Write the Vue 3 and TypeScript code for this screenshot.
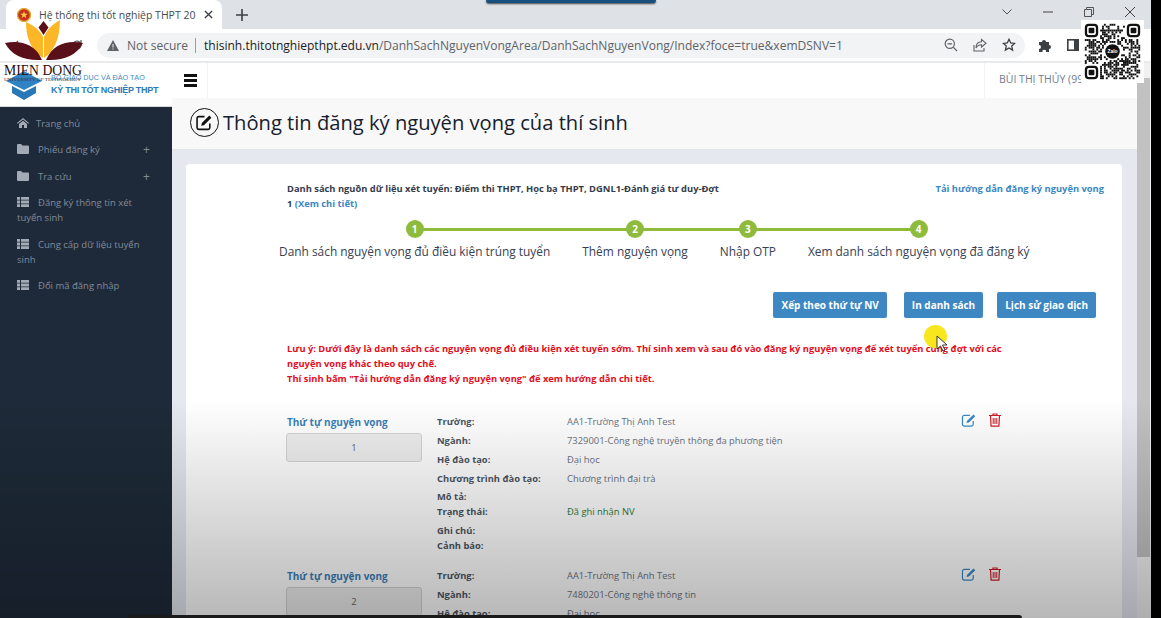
<script setup lang="ts">
import { computed } from 'vue'

interface MenuItem {
  label: string
  icon: 'home' | 'folder' | 'list'
  expandable?: boolean
}

interface Field {
  label: string
  value?: string
  status?: boolean
  rowClass?: 'tight' | 'short'
}

const menu: MenuItem[] = [
  { label: 'Trang chủ', icon: 'home' },
  { label: 'Phiếu đăng ký', icon: 'folder', expandable: true },
  { label: 'Tra cứu', icon: 'folder', expandable: true },
  { label: 'Đăng ký thông tin xét tuyển sinh', icon: 'list' },
  { label: 'Cung cấp dữ liệu tuyển sinh', icon: 'list' },
  { label: 'Đổi mã đăng nhập', icon: 'list' }
]

const steps = [
  'Danh sách nguyện vọng đủ điều kiện trúng tuyển',
  'Thêm nguyện vọng',
  'Nhập OTP',
  'Xem danh sách nguyện vọng đã đăng ký'
]

const wishes: { order: number; fields: Field[] }[] = [
  {
    order: 1,
    fields: [
      { label: 'Trường:', value: 'AA1-Trường Thị Anh Test' },
      { label: 'Ngành:', value: '7329001-Công nghệ truyền thông đa phương tiện' },
      { label: 'Hệ đào tạo:', value: 'Đại học' },
      { label: 'Chương trình đào tạo:', value: 'Chương trình đại trà', rowClass: 'short' },
      { label: 'Mô tả:', rowClass: 'tight' },
      { label: 'Trạng thái:', value: 'Đã ghi nhận NV', status: true },
      { label: 'Ghi chú:', rowClass: 'tight' },
      { label: 'Cảnh báo:' }
    ]
  },
  {
    order: 2,
    fields: [
      { label: 'Trường:', value: 'AA1-Trường Thị Anh Test' },
      { label: 'Ngành:', value: '7480201-Công nghệ thông tin' },
      { label: 'Hệ đào tạo:', value: 'Đại học' }
    ]
  }
]

// không cần giải mã được, chỉ cần trông giống mã QR
const qrCells = computed(() => {
  const size = 29
  const cells: { x: number; y: number }[] = []
  let seed = 73
  for (let y = 0; y < size; y++) {
    for (let x = 0; x < size; x++) {
      seed = (seed * 1103515245 + 12345) & 0x7fffffff
      const inFinder = (x < 8 && y < 8) || (x > 20 && y < 8) || (x < 8 && y > 20)
      const inLogo = Math.hypot(x - 14, y - 14) < 5
      if (!inFinder && !inLogo && (seed >> 12) % 100 < 52) cells.push({ x, y })
    }
  }
  return cells
})

const qrFinders = [
  { x: 0, y: 0 },
  { x: 22, y: 0 },
  { x: 0, y: 22 }
]
</script>

<template>
  <div class="window">
    <div class="browser">
      <div class="tabbar">
        <div class="tab">
          <svg class="favicon" viewBox="0 0 14 14" width="14" height="14">
            <circle cx="7" cy="7" r="6.5" fill="#c8301f" />
            <circle cx="7" cy="7" r="6.5" fill="none" stroke="#e2a92e" stroke-width="1.4" />
            <path d="M7 3.2l1 2.6h2.7L8.5 7.4l.8 2.6L7 8.5 4.700 10l.8-2.600-2.200-1.600H6z" fill="#f4cf3e" />
          </svg>
          <span class="tab-title">Hệ thống thi tốt nghiệp THPT 20</span>
          <svg class="tab-close" viewBox="0 0 10 10" width="9" height="9">
            <path d="M1 1l8 8M9 1l-8 8" stroke="#3c4043" stroke-width="1.5" />
          </svg>
        </div>
        <svg class="new-tab" viewBox="0 0 12 12" width="12" height="12">
          <path d="M6 0v12M0 6h12" stroke="#3c4043" stroke-width="1.6" />
        </svg>
        <div class="window-controls">
          <svg viewBox="0 0 10 6" width="10" height="6">
            <path d="M.5.5L5 5 9.500.5" fill="none" stroke="#555" />
          </svg>
          <svg viewBox="0 0 10 2" width="10" height="2">
            <path d="M0 1h10" stroke="#444" />
          </svg>
          <svg viewBox="0 0 10 10" width="10" height="10">
            <path d="M.5 2.500h7v7h-7zM2.500 2.500v-2h7v7h-2" fill="none" stroke="#555" />
          </svg>
          <svg viewBox="0 0 10 10" width="10" height="10">
            <path d="M0 0l10 10M10 0L0 10" stroke="#444" />
          </svg>
        </div>
      </div>

      <div class="toolbar">
        <div class="nav-icons">
          <svg viewBox="0 0 12 12" width="12" height="12">
            <path d="M11 6H2M6 2L2 6l4 4" fill="none" stroke="#5f6368" stroke-width="1.4" />
          </svg>
          <svg viewBox="0 0 12 12" width="12" height="12">
            <path d="M10 6a4 4 0 1 1-1.200-2.800M10 1v3H7" fill="none" stroke="#5f6368" stroke-width="1.3" />
          </svg>
        </div>
        <div class="omnibox">
          <svg viewBox="0 0 12 11" width="12" height="11">
            <path d="M6 0l6 11H0z" fill="#5f6368" />
            <path d="M6 4v3.500M6 8.500v1" stroke="#f1f3f4" />
          </svg>
          <span class="not-secure">Not secure</span>
          <span class="omni-sep"></span>
          <span class="url"><b>thisinh.thitotnghiepthpt.edu.vn</b>/DanhSachNguyenVongArea/DanhSachNguyenVong/Index?foce=true&amp;xemDSNV=1</span>
          <span class="omni-actions">
            <svg viewBox="0 0 14 14" width="14" height="14">
              <circle cx="5.800" cy="5.800" r="4.600" fill="none" stroke="#5f6368" stroke-width="1.200" />
              <path d="M9.200 9.200L13 13M3.500 5.800h4.600" stroke="#5f6368" stroke-width="1.200" />
            </svg>
            <svg viewBox="0 0 14 14" width="14" height="14">
              <path d="M1 7v6h10v-3M8.500 1.500L13 5.200 8.500 9V6.800C5.500 6.800 4 8 3 10c0-3.500 2-6 5.500-6.200z" fill="none" stroke="#5f6368" stroke-width="1.100" />
            </svg>
            <svg viewBox="0 0 14 14" width="14" height="14">
              <path d="M7 1.300l1.700 3.700 4 .4-3 2.700.9 4L7 10l-3.600 2.100.9-4-3-2.700 4-.4z" fill="none" stroke="#3c4043" stroke-width="1.300" />
            </svg>
          </span>
        </div>
        <svg class="puzzle" viewBox="0 0 14 14" width="14" height="14">
          <path d="M1 4h3a2 2 0 1 1 4 0h3v3a2 2 0 1 1 0 4v3H8a1.800 1.800 0 1 0-3.500 0H1v-3a2 2 0 1 0 0-4z" fill="#3c4043" />
        </svg>
        <svg class="side-panel" viewBox="0 0 12 12" width="12" height="12">
          <rect x=".8" y=".8" width="10.400" height="10.400" fill="none" stroke="#3c4043" stroke-width="1.600" />
          <rect x="7" y="1" width="4" height="10" fill="#3c4043" />
        </svg>
      </div>

      <div class="site">
        <aside class="sidebar">
          <div class="brand">
            <svg class="brand-cap" viewBox="0 0 36 30" width="36" height="30">
              <path d="M0 11L18 1l18 10-18 9z" fill="#2f83c3" />
              <path d="M6 16l12 6 12-6v7l-12 7-12-7z" fill="#2878b8" />
            </svg>
            <div class="brand-text">
              <span class="brand-top">BỘ GIÁO DỤC VÀ ĐÀO TẠO</span>
              <span class="brand-name">KỲ THI TỐT NGHIỆP THPT</span>
            </div>
          </div>
          <ul class="menu">
            <li v-for="item in menu" :key="item.label" class="menu-item" :class="{ home: item.icon === 'home' }">
              <svg v-if="item.icon === 'home'" class="menu-icon" viewBox="0 0 12 10" width="12" height="10">
                <path d="M6 0l6 5-.7.8L6 1.500.7 5.800 0 5zM2 6l4-3.200L10 6v4H7V7H5v3H2z" fill="#a2aab5" />
              </svg>
              <svg v-else-if="item.icon === 'folder'" class="menu-icon" viewBox="0 0 12 10" width="12" height="10">
                <path d="M0 1a1 1 0 0 1 1-1h3l1.500 1.500H11a1 1 0 0 1 1 1V9a1 1 0 0 1-1 1H1a1 1 0 0 1-1-1z" fill="#a2aab5" />
              </svg>
              <svg v-else class="menu-icon" viewBox="0 0 12 10" width="12" height="10">
                <path d="M0 0h3v2.800H0zM4 0h8v2.800H4zM0 3.600h3v2.800H0zM4 3.600h8v2.800H4zM0 7.200h3V10H0zM4 7.200h8V10H4z" fill="#a2aab5" />
              </svg>
              <span>{{ item.label }}</span>
              <span v-if="item.expandable" class="menu-plus">+</span>
            </li>
          </ul>
        </aside>

        <main class="main">
          <div class="topbar">
            <div class="burger">
              <span></span><span></span><span></span>
            </div>
            <div class="user">BÙI THỊ THỦY (99</div>
          </div>
          <div class="title-band">
            <span class="title-icon">
              <svg viewBox="0 0 16 16" width="17" height="17">
                <path d="M13 9v4a1.500 1.500 0 0 1-1.500 1.500h-9A1.500 1.500 0 0 1 1 13V4a1.500 1.500 0 0 1 1.500-1.500H8" fill="none" stroke="#111" stroke-width="1.500" />
                <path d="M5.500 8.500L12.500 1.500l2 2-7 7-2.600.6z" fill="#111" />
              </svg>
            </span>
            <h1>Thông tin đăng ký nguyện vọng của thí sinh</h1>
          </div>

          <div class="content">
            <section class="card">
              <div class="source-row">
                <p class="source">
                  Danh sách nguồn dữ liệu xét tuyển: Điểm thi THPT, Học bạ THPT, DGNL1-Đánh giá tư duy-Đợt 1
                  <a>(Xem chi tiết)</a>
                </p>
                <a class="guide">Tải hướng dẫn đăng ký nguyện vọng</a>
              </div>

              <div class="stepper">
                <span class="step-line"></span>
                <div v-for="(step, i) in steps" :key="step" class="step">
                  <span class="step-dot">{{ i + 1 }}</span>
                  <span class="step-label">{{ step }}</span>
                </div>
              </div>

              <div class="actions">
                <button class="btn">Xếp theo thứ tự NV</button>
                <button class="btn btn-print">In danh sách</button>
                <button class="btn">Lịch sử giao dịch</button>
              </div>

              <p class="notice">
                Lưu ý: Dưới đây là danh sách các nguyện vọng đủ điều kiện xét tuyển sớm. Thí sinh xem và sau đó vào đăng ký nguyện vọng để xét tuyển cùng đợt với các nguyện vọng khác theo quy chế.<br />
                Thí sinh bấm "Tải hướng dẫn đăng ký nguyện vọng" để xem hướng dẫn chi tiết.
              </p>

              <div v-for="wish in wishes" :key="wish.order" class="wish">
                <div class="wish-order">
                  <label>Thứ tự nguyện vọng</label>
                  <div class="order-input">{{ wish.order }}</div>
                </div>
                <dl class="wish-fields">
                  <div v-for="f in wish.fields" :key="f.label" class="field" :class="f.rowClass">
                    <dt>{{ f.label }}</dt>
                    <dd :class="{ status: f.status }">{{ f.value }}</dd>
                  </div>
                </dl>
                <div class="wish-actions">
                  <svg viewBox="0 0 16 15" width="16" height="14">
                    <path d="M12.500 8.500V12a2 2 0 0 1-2 2H3a2 2 0 0 1-2-2V4.500a2 2 0 0 1 2-2h6" fill="none" stroke="#3a87c5" stroke-width="1.300" />
                    <path d="M6 8.300L12.800 1.500l1.900 1.900L7.900 10.200l-2.500.6z" fill="#3a87c5" />
                  </svg>
                  <svg viewBox="0 0 12 14" width="12" height="14">
                    <path d="M0 2.500h12M4 2.500V1h4v1.500M1.500 2.500l.6 10.700h7.800l.6-10.700" fill="none" stroke="#cf1a26" stroke-width="1.200" />
                    <path d="M4.200 5v6M6 5v6M7.800 5v6" stroke="#cf1a26" />
                  </svg>
                </div>
              </div>
            </section>
          </div>
        </main>

        <div class="scrollbar">
          <span class="scroll-thumb"></span>
        </div>
      </div>
    </div>
    <div class="black-edge"></div>

    <!-- lớp phủ của video nằm trên trang -->
    <div class="video-shade"></div>
    <div class="video-top"></div>
    <div class="video-bottom"></div>

    <svg class="school-logo" viewBox="0 0 90 90" width="90" height="90">
      <path d="M26 22c7 3 14 8 17 15v21C34 52 26 42 26 22z" fill="#fbb726" />
      <path d="M60 20c-7 4-13 9-16 17v21c9-6 16-18 16-38z" fill="#fbb726" />
      <path d="M43.500 21l5 6.500-5 7.500-5-7.500z" fill="#5a1018" />
      <path d="M5 43c14-3 30 0 37 17-17 1-30-4-37-17z" fill="#5a1018" />
      <path d="M83 43c-14-3-30 0-37 17 17 1 30-4 37-17z" fill="#5a1018" />
      <text x="4" y="75" class="logo-name" textLength="78" lengthAdjust="spacingAndGlyphs">MIEN DONG</text>
      <text x="4" y="81" class="logo-sub" textLength="77" lengthAdjust="spacingAndGlyphs">UNIVERSITY OF TECHNOLOGY</text>
    </svg>

    <svg class="qr" viewBox="-2 -2 33 33" width="63" height="63">
      <rect x="-2" y="-2" width="33" height="33" fill="#fff" />
      <rect v-for="c in qrCells" :key="c.x + '-' + c.y" :x="c.x" :y="c.y" width="1" height="1" fill="#111" />
      <g v-for="f in qrFinders" :key="f.x + '-' + f.y">
        <rect :x="f.x + 0.6" :y="f.y + 0.6" width="5.800" height="5.800" rx="1.500" fill="none" stroke="#111" stroke-width="1.200" />
        <rect :x="f.x + 2" :y="f.y + 2" width="3" height="3" rx=".6" fill="#111" />
      </g>
      <circle cx="14.500" cy="14.500" r="3.800" fill="#111" />
      <text x="14.500" y="15.500" class="qr-zalo">Zalo</text>
    </svg>

    <span class="click-spot"></span>
    <svg class="cursor" viewBox="0 0 12 17" width="12" height="17">
      <path d="M1 1v13l3.500-3 2.500 5 2-1-2.500-5H11z" fill="#fff" stroke="#222" stroke-width=".9" />
    </svg>
  </div>
</template>

<style>
html,
body {
  margin: 0;
  overflow: hidden;
  background: #000;
}
</style>

<style scoped>
.window {
  position: relative;
  display: flex;
  width: 1161px;
  height: 618px;
  overflow: hidden;
  font-family: "Open Sans", "Noto Sans", sans-serif;
  color: #333;
}

.browser {
  display: flex;
  flex-direction: column;
  width: 1151px;
  flex: none;
}

.black-edge {
  flex: 1;
  background: #000;
}

.tabbar {
  display: flex;
  align-items: center;
  height: 29px;
  flex: none;
  background: #dee1e6;
  padding-left: 6px;
}

.tab {
  display: flex;
  align-items: center;
  width: 216px;
  height: 29px;
  box-sizing: border-box;
  padding: 0 9px 0 11px;
  background: #fff;
  border-radius: 8px 8px 0 0;
}

.favicon {
  flex: none;
}

.tab-title {
  flex: 1;
  margin-left: 8px;
  font-size: 10.500px;
  color: #45494e;
  white-space: nowrap;
  overflow: hidden;
}

.tab-close {
  flex: none;
  margin-left: 6px;
}

.new-tab {
  margin-left: 14px;
}

.window-controls {
  display: flex;
  align-items: center;
  gap: 31px;
  margin-left: auto;
  margin-top: -6px;
  padding-right: 16px;
}

.toolbar {
  display: flex;
  align-items: center;
  height: 34px;
  flex: none;
  background: #fff;
  box-sizing: border-box;
  border-bottom: 2px solid #e9eaec;
}

.nav-icons {
  display: flex;
  gap: 47px;
  width: 97px;
  box-sizing: border-box;
  padding-left: 12px;
  flex: none;
}

.omnibox {
  display: flex;
  align-items: center;
  width: 928px;
  height: 25px;
  flex: none;
  box-sizing: border-box;
  padding: 0 9px 0 10px;
  background: #f1f3f4;
  border-radius: 13px;
  font-size: 12.040px;
}

.not-secure {
  margin-left: 8px;
  color: #5f6368;
}

.omni-sep {
  width: 1px;
  height: 15px;
  background: #9aa0a6;
  margin: 0 8px 0 7px;
}

.url {
  color: #5f6368;
  white-space: nowrap;
}

.url b {
  font-weight: 400;
  color: #202124;
}

.omni-actions {
  display: flex;
  gap: 15px;
  margin-left: auto;
}

.puzzle {
  margin-left: 13px;
}

.side-panel {
  margin-left: 15px;
}

.site {
  display: flex;
  flex: 1;
  min-height: 0;
}

.sidebar {
  width: 172px;
  flex: none;
  display: flex;
  flex-direction: column;
  background: #1e2a39;
}

.brand {
  display: flex;
  align-items: flex-end;
  gap: 9px;
  height: 44px;
  flex: none;
  box-sizing: border-box;
  padding: 0 0 6px 6px;
  background: #fff;
  border-bottom: 1px solid #d8d8d8;
}

.brand-cap {
  flex: none;
}

.brand-text {
  display: flex;
  flex-direction: column;
  margin-bottom: 3px;
  white-space: nowrap;
}

.brand-top {
  font-size: 7.200px;
  line-height: 12px;
  color: #3f8ac6;
  font-family: "Liberation Sans", sans-serif;
}

.brand-name {
  font-size: 9px;
  line-height: 13px;
  font-weight: 700;
  letter-spacing: -0.25px;
  color: #2b7ab8;
  font-family: "Liberation Sans", sans-serif;
}

.menu {
  display: flex;
  flex-direction: column;
  gap: 11.500px;
  list-style: none;
  margin: 0;
  padding: 8.500px 0 0 17px;
  font-size: 9.500px;
  line-height: 15px;
  color: #808b99;
}

.menu-item {
  position: relative;
  width: 128px;
}

.menu-icon {
  margin-right: 9px;
  vertical-align: -1px;
}

.menu-item.home .menu-icon {
  margin-right: 7px;
}

.menu-plus {
  position: absolute;
  left: 126px;
  top: 0;
  font-size: 12px;
}

.main {
  display: flex;
  flex-direction: column;
  flex: 1;
  min-width: 0;
  background: #e5e9ef;
}

.topbar {
  display: flex;
  align-items: stretch;
  height: 35px;
  flex: none;
  background: #fff;
}

.burger {
  display: flex;
  flex-direction: column;
  justify-content: center;
  gap: 2.500px;
  width: 36px;
  box-sizing: border-box;
  padding-left: 12px;
  border-right: 1px solid #f2f2f2;
}

.burger span {
  display: block;
  width: 13px;
  height: 2.500px;
  background: #111;
}

.user {
  margin-left: auto;
  width: 153px;
  box-sizing: border-box;
  padding: 9px 0 0 14px;
  font-size: 10.500px;
  color: #6f7a90;
  border-left: 1px solid #f2f2f2;
  white-space: nowrap;
}

.title-band {
  display: flex;
  align-items: center;
  gap: 4px;
  height: 52px;
  flex: none;
  box-sizing: border-box;
  padding: 0 0 2px 18px;
  background: #f8f8f8;
  border-bottom: 1px solid #e6e6e6;
}

.title-icon {
  display: flex;
  align-items: center;
  justify-content: center;
  width: 29px;
  height: 29px;
  box-sizing: border-box;
  border: 1.500px solid #111;
  border-radius: 50%;
}

.title-band h1 {
  margin: 0 0 2px;
  font-size: 20.150px;
  font-weight: 400;
  color: #16202e;
  white-space: nowrap;
}

.content {
  flex: 1;
  min-height: 0;
  padding: 14px 15px 0 14px;
  overflow: hidden;
}

.card {
  box-sizing: border-box;
  padding: 17px 26px 0 101px;
  background: #fff;
  border-radius: 4px 4px 0 0;
  min-height: 600px;
}

.source-row {
  display: flex;
  justify-content: space-between;
  margin-right: -8px;
  font-size: 9.350px;
  line-height: 15px;
  font-weight: 700;
}

.source {
  width: 436px;
  margin: 0;
  color: #333c4a;
}

.source a {
  color: #3a87c5;
}

.guide {
  color: #3a87c5;
  white-space: nowrap;
}

.stepper {
  position: relative;
  display: inline-flex;
  gap: 32px;
  margin: 9px 0 0 -8px;
}

.step-line {
  position: absolute;
  top: 8px;
  left: 136px;
  right: 111px;
  height: 3px;
  background: #8ebb3c;
}

.step {
  position: relative;
  display: flex;
  flex-direction: column;
  align-items: center;
  gap: 4px;
}

.step-dot {
  display: flex;
  align-items: center;
  justify-content: center;
  width: 18px;
  height: 18px;
  border-radius: 50%;
  background: #8ebb3c;
  color: #fff;
  font-size: 10px;
  font-weight: 700;
}

.step-label {
  font-size: 11.900px;
  line-height: 18px;
  color: #364152;
  white-space: nowrap;
}

.actions {
  display: flex;
  justify-content: flex-end;
  margin-top: 32px;
}

.btn {
  height: 26px;
  margin-left: 14px;
  padding: 0 8px;
  border: none;
  border-radius: 2px;
  background: #3d87c3;
  color: #fff;
  font-family: inherit;
  font-size: 10px;
  font-weight: 700;
  white-space: nowrap;
}

.btn-print {
  margin-left: 17px;
}

.notice {
  width: 730px;
  margin: 23px 0 0;
  font-size: 9.360px;
  line-height: 15px;
  font-weight: 700;
  color: #e30d1c;
}

.wish {
  position: relative;
  display: flex;
  margin-top: 26px;
  font-size: 9.400px;
}

.wish + .wish {
  margin-top: 11px;
}

.wish-order {
  width: 150px;
  flex: none;
  padding-top: 1px;
}

.wish-order label {
  display: block;
  font-size: 10px;
  line-height: 19px;
  font-weight: 700;
  color: #3a7fb8;
}

.order-input {
  width: 136px;
  height: 29px;
  margin: 1px 0 0 -1px;
  box-sizing: border-box;
  border: 1px solid #d4d4d4;
  border-radius: 3px;
  background: #eee;
  color: #666;
  text-align: center;
  line-height: 27px;
}

.wish-fields {
  margin: 0;
  flex: 1;
}

.field {
  display: flex;
  height: 19px;
  line-height: 19px;
}

.field.short {
  height: 18px;
}

.field.tight {
  height: 15px;
}

.field dt {
  width: 130px;
  font-weight: 700;
  color: #4b5563;
}

.field dd {
  margin: 0;
  color: #6b7280;
}

.field dd.status {
  color: #2f7d32;
}

.wish-actions {
  position: absolute;
  top: 1px;
  left: 674px;
  display: flex;
  align-items: flex-start;
  gap: 12px;
}

.scrollbar {
  position: relative;
  width: 14px;
  flex: none;
  background: #f1f1f1;
}

.scroll-thumb {
  position: absolute;
  top: 15px;
  left: 0;
  right: 1px;
  height: 479px;
  background: #c1c1c1;
}

.video-shade {
  position: absolute;
  inset: 400px 10px 0 0;
  background: linear-gradient(to bottom, rgba(0, 0, 0, 0), rgba(0, 0, 0, 0.28));
  pointer-events: none;
}

.video-top {
  position: absolute;
  top: 0;
  left: 486px;
  width: 170px;
  height: 3px;
  background: #17507f;
  border-radius: 0 0 3px 3px;
  box-shadow: 0 1px 2px rgba(0, 0, 0, 0.7);
}

.video-bottom {
  position: absolute;
  left: 128px;
  bottom: 0;
  width: 894px;
  height: 3px;
  background: #1a1a1a;
  border-radius: 3px 3px 0 0;
}

.school-logo {
  position: absolute;
  top: 0;
  left: 0;
}

.logo-name {
  font-family: "Liberation Serif", serif;
  font-size: 14px;
  fill: #2a0a0d;
}

.logo-sub {
  font-family: "Liberation Serif", serif;
  font-size: 5px;
  fill: #3a2a2a;
}

.qr {
  position: absolute;
  top: 20px;
  left: 1081px;
}

.qr-zalo {
  font-family: "Liberation Sans", sans-serif;
  font-size: 2.600px;
  font-weight: 700;
  fill: #fff;
  text-anchor: middle;
}

.click-spot {
  position: absolute;
  top: 325px;
  left: 924px;
  width: 23px;
  height: 23px;
  border-radius: 50%;
  background: #f8e71c;
}

.cursor {
  position: absolute;
  top: 335px;
  left: 936px;
}
</style>
